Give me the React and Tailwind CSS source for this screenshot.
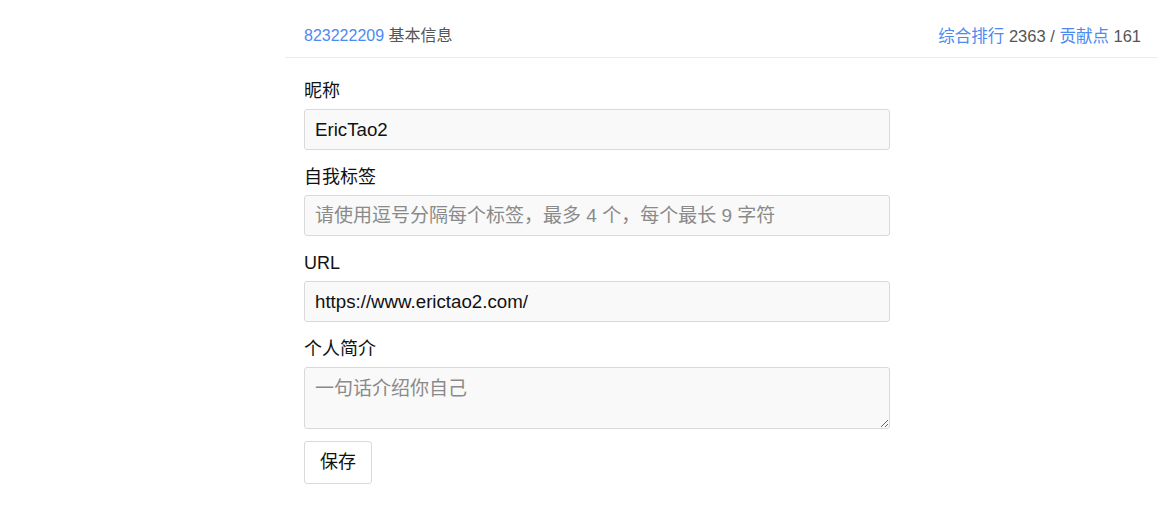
import React from 'react';

const font = { fontFamily: '"Liberation Sans", "Noto Sans CJK SC", sans-serif' };

function Field({ label, children }) {
  return (
    <div className="mb-[15px]">
      <label className="block text-[18px] leading-[24px] text-[#111] mb-[6px]">{label}</label>
      {children}
    </div>
  );
}

const inputCls =
  'block w-[586px] h-[41px] px-[10px] bg-[#f9f9f9] border border-[#d9d9d9] rounded-[3px] text-[18.7px] text-[#111] placeholder:text-[19px] placeholder:text-[#8a8a8a] outline-none';

export default function App() {
  return (
    <div className="min-h-screen bg-white" style={font}>
      <div className="ml-[285px]">
        {/* Header */}
        <div className="flex items-center justify-between pl-[19px] pr-[17px] pt-[24px] pb-[9px] border-b border-[#ececec] text-[16px] leading-[24px] text-[#555]">
          <div>
            <a href="#" className="text-[#4d8af0]">823222209</a> 基本信息
          </div>
          <div className="text-[16.5px]">
            <a href="#" className="text-[#4d8af0]">综合排行</a> 2363 / <a href="#" className="text-[#4d8af0]">贡献点</a> 161
          </div>
        </div>

        {/* Form */}
        <form className="pl-[19px] pt-[21px]" onSubmit={e => e.preventDefault()}>
          <Field label="昵称">
            <input className={inputCls} defaultValue="EricTao2" />
          </Field>
          <Field label="自我标签">
            <input className={inputCls} placeholder="请使用逗号分隔每个标签，最多 4 个，每个最长 9 字符" />
          </Field>
          <Field label="URL">
            <input className={inputCls} defaultValue="https://www.erictao2.com/" />
          </Field>
          <div className="mb-[12px]">
            <label className="block text-[18px] leading-[24px] text-[#111] mb-[6px]">个人简介</label>
            <textarea
              className="block w-[586px] h-[62px] px-[10px] py-[8px] bg-[#f9f9f9] border border-[#d9d9d9] rounded-[3px] text-[18.7px] leading-[26px] text-[#111] placeholder:text-[19px] placeholder:text-[#8a8a8a] outline-none"
              placeholder="一句话介绍你自己"
            />
          </div>
          <button
            type="submit"
            className="h-[43px] px-[15px] bg-white border border-[#d9d9d9] rounded-[3px] text-[18px] text-[#111]"
          >
            保存
          </button>
        </form>
      </div>
    </div>
  );
}
